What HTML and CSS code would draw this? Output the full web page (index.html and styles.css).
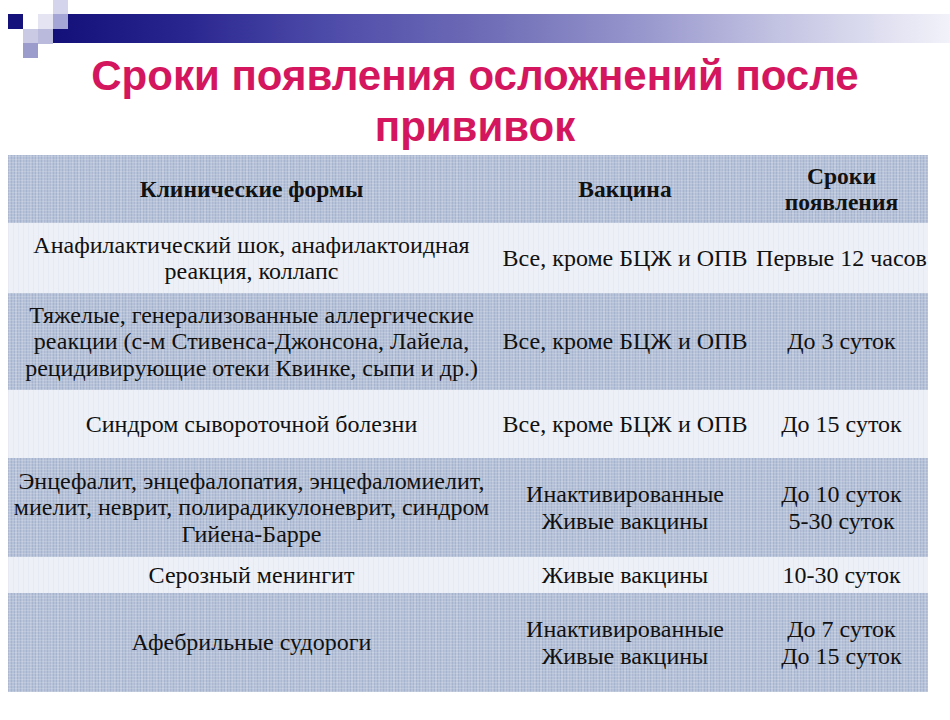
FILE: index.html
```html
<!DOCTYPE html>
<html lang="ru">
<head>
<meta charset="utf-8">
<title>Сроки появления осложнений после прививок</title>
<link rel="stylesheet" href="styles.css">
</head>
<body>
<div class="slide">
  <div class="deco">
    <span class="sq sq-navy"></span>
    <span class="sq sq-a"></span>
    <span class="sq sq-b"></span>
    <span class="sq sq-c"></span>
    <span class="sq sq-d"></span>
    <span class="sq sq-e"></span>
    <span class="sq sq-f"></span>
    <div class="bar"></div>
  </div>
  <h1 class="title">Сроки появления осложнений после<br>прививок</h1>
  <table class="grid">
    <colgroup>
      <col class="c1"><col class="c2"><col class="c3">
    </colgroup>
    <tr class="dark h-head">
      <th>Клинические формы</th>
      <th>Вакцина</th>
      <th>Сроки<br>появления</th>
    </tr>
    <tr class="light h-1">
      <td>Анафилактический шок, анафилактоидная<br>реакция, коллапс</td>
      <td>Все, кроме БЦЖ и ОПВ</td>
      <td>Первые 12 часов</td>
    </tr>
    <tr class="dark h-2">
      <td>Тяжелые, генерализованные аллергические<br>реакции (с-м Стивенса-Джонсона, Лайела,<br>рецидивирующие отеки Квинке, сыпи и др.)</td>
      <td>Все, кроме БЦЖ и ОПВ</td>
      <td>До 3 суток</td>
    </tr>
    <tr class="light h-3">
      <td>Синдром сывороточной болезни</td>
      <td>Все, кроме БЦЖ и ОПВ</td>
      <td>До 15 суток</td>
    </tr>
    <tr class="dark h-4">
      <td>Энцефалит, энцефалопатия, энцефаломиелит,<br>миелит, неврит, полирадикулоневрит, синдром<br>Гийена-Барре</td>
      <td>Инактивированные<br>Живые вакцины</td>
      <td>До 10 суток<br>5-30 суток</td>
    </tr>
    <tr class="light h-5">
      <td>Серозный менингит</td>
      <td>Живые вакцины</td>
      <td>10-30 суток</td>
    </tr>
    <tr class="dark h-6">
      <td>Афебрильные судороги</td>
      <td>Инактивированные<br>Живые вакцины</td>
      <td>До 7 суток<br>До 15 суток</td>
    </tr>
  </table>
</div>
</body>
</html>
```

FILE: styles.css
```css
html, body {
  margin: 0;
  padding: 0;
  background: #ffffff;
}

.slide {
  width: 950px;
  height: 720px;
  overflow: hidden;
  background: #ffffff;
}

.deco {
  position: relative;
  height: 45px;
}

.bar {
  margin-left: 53px;
  margin-top: 0;
  padding-top: 14px;
  height: 29px;
  box-sizing: content-box;
  background-clip: content-box;
  background-image: linear-gradient(90deg, #14107a 0%, #2a2690 15%, #4c4aa8 30%, #7270b8 50%, #9695cc 65%, #c6c6e4 82%, #f2f2fa 100%);
}

.sq {
  position: absolute;
  width: 15px;
  height: 15px;
  z-index: 1;
}
.sq-navy { left: 8px; top: 14px; background: #16127c; }
.sq-a { left: 53px; top: 0; background: #d4d4ec; }
.sq-b { left: 38px; top: 14px; background: #e4e4f2; }
.sq-c { left: 53px; top: 14px; background: #a6a6d6; }
.sq-d { left: 23px; top: 29px; background: #cacae4; }
.sq-e { left: 38px; top: 29px; background: #babadc; }
.sq-f { left: 23px; top: 43px; background: #9c9ccc; }

.title {
  box-sizing: border-box;
  margin: 0;
  padding-top: 5px;
  height: 110px;
  font-family: "Liberation Sans", Arial, sans-serif;
  font-weight: bold;
  font-size: 42px;
  line-height: 51px;
  color: #d4165f;
  text-align: center;
  white-space: nowrap;
}

.grid {
  margin-left: 8px;
  width: 920px;
  table-layout: fixed;
  border-collapse: collapse;
  border-spacing: 0;
  font-family: "Liberation Serif", "Times New Roman", serif;
  color: #111111;
}

.c1 { width: 487px; }
.c2 { width: 260px; }
.c3 { width: 173px; }

.grid th,
.grid td {
  padding: 0;
  text-align: center;
  vertical-align: middle;
  white-space: nowrap;
}

.grid td {
  font-size: 24px;
  line-height: 26.5px;
}

.grid th {
  font-size: 23.5px;
  font-weight: bold;
  line-height: 26px;
}

.dark {
  background-color: #b5c1d8;
  background-image:
    repeating-linear-gradient(0deg, rgba(255,255,255,0.16) 0 1px, rgba(0,0,0,0) 1px 3px),
    repeating-linear-gradient(90deg, rgba(40,60,110,0.10) 0 1px, rgba(0,0,0,0) 1px 3px),
    repeating-linear-gradient(90deg, rgba(255,255,255,0.10) 0 2px, rgba(0,0,0,0) 2px 7px);
}

.light {
  background-color: #edf0f6;
  background-image:
    repeating-linear-gradient(90deg, rgba(180,190,215,0.12) 0 1px, rgba(0,0,0,0) 1px 5px);
}

.h-head { height: 68px; }
.h-1 { height: 70px; }
.h-2 { height: 97px; }
.h-3 { height: 68px; }
.h-4 { height: 99px; }
.h-5 { height: 36px; }
.h-6 { height: 99px; }
```
